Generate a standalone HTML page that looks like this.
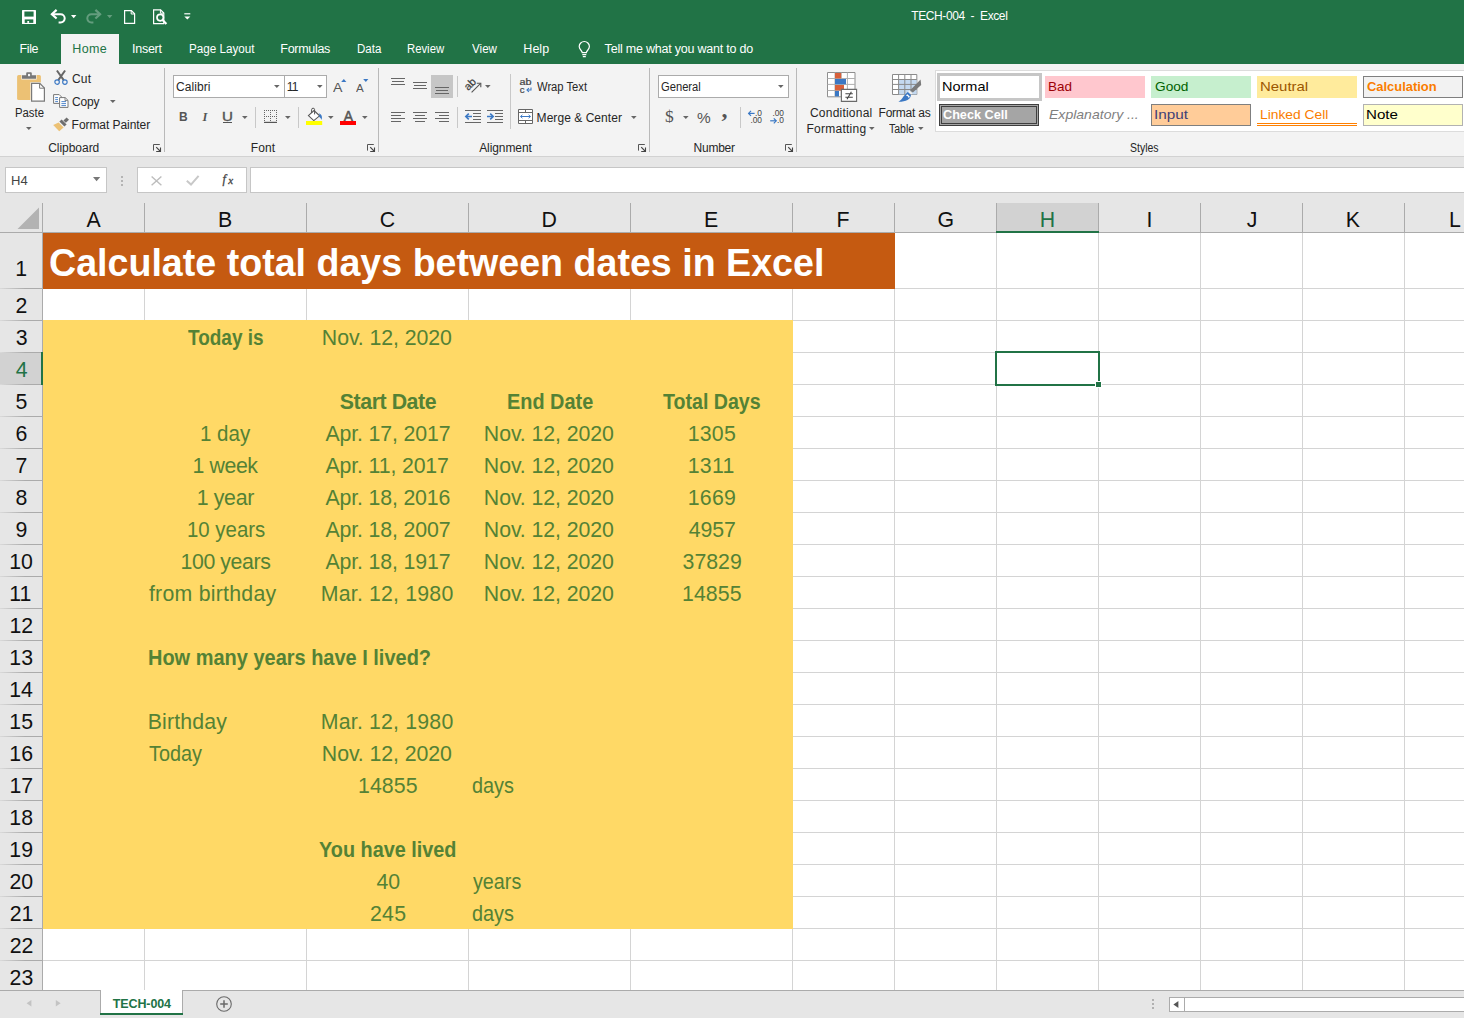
<!DOCTYPE html>
<html lang="en">
<head>
<meta charset="utf-8">
<title>TECH-004 - Excel</title>
<style>
*{box-sizing:border-box;margin:0;padding:0}
html,body{width:1464px;height:1018px;overflow:hidden;background:#fff}
body{position:relative;font-family:"Liberation Sans",sans-serif;font-size:12px;color:#262626}
.abs,.t,.c,.ch,.rh,.vl,.hl,.box,.sep,.title{position:absolute}
.t{white-space:nowrap;line-height:16px;height:16px;letter-spacing:-0.25px}
svg{position:absolute;overflow:visible}
.w{color:#fff}
.box{background:#fff;border:1px solid #c6c6c6}
.sep{width:1px;background:#d5d5d5}
.vl{top:232px;width:1px;height:758px;background:#d4d4d4}
.hl{left:42px;width:1422px;height:1px;background:#d4d4d4}
.ch{height:28px;line-height:28px;font-size:21.3px;color:#111;white-space:nowrap}
.rh{height:32px;line-height:32px;font-size:21.3px;color:#111;white-space:nowrap}
.sel{color:#217346}
.c{height:32px;line-height:32px;font-size:21.3px;color:#548235;white-space:nowrap}
.b{font-weight:bold}
.title{font-weight:bold;font-size:39px;color:#fff;height:56px;line-height:56px;white-space:nowrap}
</style>
</head>
<body>
<div class="abs" style="left:0;top:0;width:1464px;height:64px;background:#217346"></div>
<div class="abs" style="left:61px;top:34px;width:58px;height:30px;background:#f3f3f3"></div>
<svg style="left:22px;top:10px" width="14" height="14" viewBox="0 0 14 14"><rect x="0" y="0" width="14" height="14" rx="0.6" fill="#fff"/><rect x="2.4" y="1.5" width="9.2" height="5.1" fill="#217346"/><rect x="2.7" y="9.4" width="8.6" height="3.5" fill="#217346"/><rect x="5.3" y="11" width="1.8" height="1.9" fill="#fff"/></svg>
<svg style="left:50px;top:9px" width="16" height="15" viewBox="0 0 16 15"><path d="M1.8 5.2H10.6A4.1 4.1 0 0 1 10.6 13.4H8.6" fill="none" stroke="#fff" stroke-width="2"/><path d="M6.6 0.9L1.9 5.2L6.6 9.5" fill="none" stroke="#fff" stroke-width="2.2"/></svg>
<svg style="left:71px;top:15px" width="6" height="4"><path d="M0 0H5.4L2.7 3.2Z" fill="#fff"/></svg>
<svg style="left:86px;top:9px" width="16" height="15" viewBox="0 0 16 15"><g transform="translate(16,0) scale(-1,1)" opacity="0.3"><path d="M1.8 5.2H10.6A4.1 4.1 0 0 1 10.6 13.4H8.6" fill="none" stroke="#fff" stroke-width="2"/><path d="M6.6 0.9L1.9 5.2L6.6 9.5" fill="none" stroke="#fff" stroke-width="2.2"/></g></svg>
<svg style="left:107px;top:15px" width="6" height="4"><path d="M0 0H5.4L2.7 3.2Z" fill="#fff" opacity="0.3"/></svg>
<svg style="left:124px;top:10px" width="12" height="14" viewBox="0 0 12 14"><path d="M0.6 0.6H7.4L10.6 3.8V13.4H0.6Z" fill="none" stroke="#fff" stroke-width="1.2"/><path d="M7.2 0.6V4H10.6" fill="none" stroke="#fff" stroke-width="1"/></svg>
<svg style="left:153px;top:9px" width="15" height="16" viewBox="0 0 15 16"><path d="M0.6 0.8H7.6L10.8 4V14.6H0.6Z" fill="none" stroke="#fff" stroke-width="1.2"/><path d="M7.4 0.8V4.2H10.8" fill="none" stroke="#fff" stroke-width="1"/><circle cx="7.2" cy="8.6" r="3.2" fill="#217346" stroke="#fff" stroke-width="1.7"/><path d="M9.6 11L13.4 15" stroke="#fff" stroke-width="2.1"/></svg>
<svg style="left:184px;top:13px" width="7" height="8"><path d="M0.3 0.8H6.3" stroke="#fff" stroke-width="1.2"/><path d="M0.3 3.4H6.3L3.3 6.6Z" fill="#fff"/></svg>
<div class="t w" style="left:911.23px;top:8px;letter-spacing:-0.399px">TECH-004&nbsp; -&nbsp; Excel</div>
<div class="t w" style="left:19.47px;top:41px;font-size:12.5px;letter-spacing:-0.354px">File</div>
<div class="t" style="left:72.37px;top:41px;font-size:12.5px;letter-spacing:0.346px;color:#217346">Home</div>
<div class="t w" style="left:132.05px;top:41px;font-size:12.5px;letter-spacing:-0.263px">Insert</div>
<div class="t w" style="left:188.64px;top:41px;font-size:12.5px;letter-spacing:0.000px;transform:scaleX(0.9337);transform-origin:0 0">Page Layout</div>
<div class="t w" style="left:280.37px;top:41px;font-size:12.5px;letter-spacing:-0.302px">Formulas</div>
<div class="t w" style="left:356.55px;top:41px;font-size:12.5px;letter-spacing:0.000px;transform:scaleX(0.9220);transform-origin:0 0">Data</div>
<div class="t w" style="left:407.37px;top:41px;font-size:12.5px;letter-spacing:0.000px;transform:scaleX(0.9052);transform-origin:0 0">Review</div>
<div class="t w" style="left:471.75px;top:41px;font-size:12.5px;letter-spacing:0.000px;transform:scaleX(0.9310);transform-origin:0 0">View</div>
<div class="t w" style="left:523.37px;top:41px;font-size:12.5px;letter-spacing:0.014px">Help</div>
<div class="t w" style="left:604.62px;top:41px;font-size:12.5px;letter-spacing:-0.216px">Tell me what you want to do</div>
<svg style="left:578px;top:41px" width="13" height="17" viewBox="0 0 13 17"><path d="M4.2 11.6C4.2 9.6 1.2 8.6 1.2 5.6A5.1 5.1 0 0 1 11.4 5.6C11.4 8.6 8.4 9.6 8.4 11.6Z" fill="none" stroke="#fff" stroke-width="1.2"/><path d="M4.3 13.6H8.3M4.8 15.6H7.8" stroke="#fff" stroke-width="1.1"/></svg>
<div class="abs" style="left:0;top:64px;width:1464px;height:92px;background:#f3f3f3"></div>
<div class="abs" style="left:0;top:156px;width:1464px;height:1px;background:#d2d2d2"></div>
<div class="abs" style="left:164px;top:68px;width:1px;height:84px;background:#b9b9b9"></div>
<div class="abs" style="left:378px;top:68px;width:1px;height:84px;background:#b9b9b9"></div>
<div class="abs" style="left:649px;top:68px;width:1px;height:84px;background:#b9b9b9"></div>
<div class="abs" style="left:796px;top:68px;width:1px;height:84px;background:#b9b9b9"></div>
<svg style="left:17px;top:72px" width="29" height="30"><rect x="0.1" y="2.9" width="23.8" height="25.1" rx="1.6" fill="#ecc174"/><path d="M4.4 7.6V2.8H8.6V1.2Q8.6 0 9.8 0H14.2Q15.4 0 15.4 1.2V2.8H19.6V7.6Z" fill="#f3f3f3"/><path d="M5 6.7V3.3H9.2V1.2Q9.2 0.3 10.1 0.3H13.9Q14.8 0.3 14.8 1.2V3.3H19V6.7Z" fill="#777"/><rect x="11" y="1.9" width="2.1" height="2.3" fill="#f3f3f3"/><path d="M13.4 10.2H23.4L28.6 15.4V30H13.4Z" fill="#f3f3f3"/><path d="M14.6 11.4H22.8L27.4 16V29.2H14.6Z" fill="#fff" stroke="#7a7a7a" stroke-width="1.2"/><path d="M22.6 11.4V16.2H27.4" fill="none" stroke="#7a7a7a" stroke-width="1"/></svg>
<div class="t" style="left:14.77px;top:105px;letter-spacing:0.000px;transform:scaleX(0.9428);transform-origin:0 0">Paste</div>
<svg style="left:25.7px;top:126.8px" width="6" height="4"><path d="M0 0H5.6L2.8 3Z" fill="#666"/></svg>
<svg style="left:54px;top:70px" width="14" height="15"><path d="M2.9 0.5L9.9 10.4M11.1 0.5L4.1 10.4" stroke="#666" stroke-width="2" fill="none"/><circle cx="3.1" cy="12.1" r="2.25" fill="#f3f3f3" stroke="#3b78c4" stroke-width="1.15"/><circle cx="10.9" cy="12.1" r="2.25" fill="#f3f3f3" stroke="#3b78c4" stroke-width="1.15"/></svg>
<div class="t" style="left:71.99px;top:71px;letter-spacing:0.212px">Cut</div>
<svg style="left:52.5px;top:94px" width="16" height="14"><path d="M0.6 0.6H6.2L8.6 3V9.4H0.6Z" fill="#fff" stroke="#777" stroke-width="1"/><path d="M2.2 3.6H5M2.2 5.6H5M2.2 7.6H5" stroke="#3b78c4" stroke-width="0.9"/><path d="M6.6 3.6H12.2L15 6.4V13.4H6.6Z" fill="#fff" stroke="#777" stroke-width="1"/><path d="M12 3.8V6.6H14.8" fill="none" stroke="#777" stroke-width="0.9"/><path d="M8.4 7.6H13M8.4 9.6H13M8.4 11.6H13" stroke="#3b78c4" stroke-width="0.9"/></svg>
<div class="t" style="left:71.99px;top:94px;letter-spacing:-0.127px">Copy</div>
<svg style="left:109.7px;top:100px" width="6" height="4"><path d="M0 0H5.6L2.8 3Z" fill="#666"/></svg>
<svg style="left:53px;top:116.5px" width="16" height="15"><path d="M10.4 3.4L13.6 0.4L16 2.8L12.8 5.8Z" fill="#6e6e6e"/><path d="M6.4 4.6L8.6 2.6L13.6 7.6L11.4 9.6Z" fill="#6e6e6e"/><path d="M5.6 5.4L10.6 10.4L6.2 14.2L0.2 8Z" fill="#ecc174"/></svg>
<div class="t" style="left:71.62px;top:117px;letter-spacing:-0.060px">Format Painter</div>
<div class="t grp" style="left:48.19px;top:140px;letter-spacing:-0.035px">Clipboard</div>
<svg style="left:153px;top:144px" width="8" height="8"><path d="M0.5 6.6V0.5H6.8" fill="none" stroke="#555" stroke-width="1"/><path d="M3.2 3.2L7 7" stroke="#444" stroke-width="1.1"/><path d="M7.5 3.4V7.5H3.2" fill="none" stroke="#444" stroke-width="1.1"/></svg>
<div class="box" style="left:173px;top:75px;width:112px;height:23px;border-color:#ababab"></div>
<div class="box" style="left:284px;top:75px;width:43px;height:23px;border-color:#ababab"></div>
<div class="t" style="left:175.89px;top:79px;letter-spacing:0.085px">Calibri</div>
<svg style="left:273.8px;top:84.8px" width="6" height="4"><path d="M0 0H5.6L2.8 3Z" fill="#666"/></svg>
<div class="t" style="left:286.79px;top:79px;letter-spacing:-0.800px">11</div>
<svg style="left:316.6px;top:84.8px" width="6" height="4"><path d="M0 0H5.6L2.8 3Z" fill="#666"/></svg>
<div class="t" style="left:333.47px;top:80px;font-size:12.9px;letter-spacing:0.000px;transform:scaleX(1.0989);transform-origin:0 0;color:#555">A</div>
<svg style="left:341px;top:79px" width="6" height="4"><path d="M0.2 3H5.4L2.8 0Z" fill="#3b78c4"/></svg>
<div class="t" style="left:356.18px;top:80px;font-size:10.5px;letter-spacing:0.000px;transform:scaleX(1.1059);transform-origin:0 0;color:#555">A</div>
<svg style="left:362.7px;top:79px" width="6" height="4"><path d="M0.2 0H5.4L2.8 3Z" fill="#3b78c4"/></svg>
<div class="t" style="left:179.00px;top:109px;letter-spacing:0.082px;font-weight:bold;color:#555">B</div>
<div class="t" style="left:202.42px;top:109px;font-size:12.5px;font-weight:bold;font-style:italic;font-family:'Liberation Serif',serif;color:#555">I</div>
<div class="t" style="left:221.93px;top:109px;letter-spacing:0.000px;transform:scaleX(1.2620);transform-origin:0 0;color:#555;-webkit-text-stroke:0.35px #555">U</div>
<div class="abs" style="left:223px;top:122px;width:9px;height:1px;background:#555"></div>
<svg style="left:241.8px;top:116px" width="6" height="4"><path d="M0 0H5.6L2.8 3Z" fill="#666"/></svg>
<div class="abs" style="left:255px;top:107px;width:1px;height:21px;background:#c8c8c8"></div>
<svg style="left:264px;top:110px" width="13" height="13"><path d="M0.5 0V11M6.5 0V11M12.5 0V11M0 0.5H13M0 6.5H13" fill="none" stroke="#666" stroke-width="1" stroke-dasharray="1 1"/><path d="M0 12.4H13" stroke="#555" stroke-width="1.2"/></svg>
<svg style="left:284.8px;top:116px" width="6" height="4"><path d="M0 0H5.6L2.8 3Z" fill="#666"/></svg>
<div class="abs" style="left:298px;top:107px;width:1px;height:21px;background:#c8c8c8"></div>
<svg style="left:306px;top:108px" width="17" height="17"><path d="M2.4 7.6L8 2.6L13.6 7.8L7.8 12.6Z" fill="#fff" stroke="#555" stroke-width="1.1"/><path d="M5.6 5V1.7A1.3 1.3 0 0 1 8.6 1.7V6.4" fill="none" stroke="#555" stroke-width="1"/><path d="M12.8 5.2C15.6 6 16.8 9 15.4 12C15 10.4 14.2 9.4 12.6 8.8L13.8 7.6Z" fill="#3b78c4"/><path d="M0 13H16.2V17H0Z" fill="#ffff00"/></svg>
<svg style="left:327.7px;top:116px" width="6" height="4"><path d="M0 0H5.6L2.8 3Z" fill="#666"/></svg>
<div class="t" style="left:343.77px;top:109px;font-size:13.8px;letter-spacing:0.049px;color:#555;-webkit-text-stroke:0.5px #555">A</div>
<div class="abs" style="left:340px;top:121px;width:16px;height:4px;background:#ff0000"></div>
<svg style="left:361.7px;top:116px" width="6" height="4"><path d="M0 0H5.6L2.8 3Z" fill="#666"/></svg>
<div class="t grp" style="left:250.72px;top:140px;letter-spacing:0.120px">Font</div>
<svg style="left:367px;top:144px" width="8" height="8"><path d="M0.5 6.6V0.5H6.8" fill="none" stroke="#555" stroke-width="1"/><path d="M3.2 3.2L7 7" stroke="#444" stroke-width="1.1"/><path d="M7.5 3.4V7.5H3.2" fill="none" stroke="#444" stroke-width="1.1"/></svg>
<div class="abs" style="left:391.0px;top:78px;width:14px;height:1px;background:#666"></div>
<div class="abs" style="left:392.0px;top:81px;width:12px;height:1px;background:#666"></div>
<div class="abs" style="left:391.0px;top:84px;width:14px;height:1px;background:#666"></div>
<div class="abs" style="left:413.0px;top:82px;width:14px;height:1px;background:#666"></div>
<div class="abs" style="left:414.0px;top:85px;width:12px;height:1px;background:#666"></div>
<div class="abs" style="left:413.0px;top:88px;width:14px;height:1px;background:#666"></div>
<div class="abs" style="left:431px;top:75px;width:22px;height:23px;background:#c6c6c6"></div>
<div class="abs" style="left:435.0px;top:87px;width:14px;height:1px;background:#666"></div>
<div class="abs" style="left:436.0px;top:90px;width:12px;height:1px;background:#666"></div>
<div class="abs" style="left:435.0px;top:93px;width:14px;height:1px;background:#666"></div>
<div class="abs" style="left:457px;top:76px;width:1px;height:21px;background:#c8c8c8"></div>
<svg style="left:464px;top:77px" width="19" height="17"><text x="0" y="0" transform="translate(4.2,14) rotate(-45)" font-family="Liberation Sans, sans-serif" font-size="10.8" fill="#444" stroke="#444" stroke-width="0.25">ab</text><path d="M7.6 15.4L16.4 6.6" stroke="#555" stroke-width="1.1"/><path d="M12.8 6.2H16.8V10.2" fill="none" stroke="#555" stroke-width="1.1"/></svg>
<svg style="left:485px;top:84.6px" width="6" height="4"><path d="M0 0H5.6L2.8 3Z" fill="#666"/></svg>
<div class="abs" style="left:510px;top:74px;width:1px;height:55px;background:#c8c8c8"></div>
<svg style="left:519px;top:78px" width="14" height="16"><text x="0.6" y="7.2" font-family="Liberation Sans, sans-serif" font-size="8.4" fill="#444" stroke="#444" stroke-width="0.2" textLength="12" lengthAdjust="spacingAndGlyphs">ab</text><text x="0.8" y="14.8" font-family="Liberation Sans, sans-serif" font-size="9.6" fill="#444" stroke="#444" stroke-width="0.2">c</text><path d="M12 9.6V12H8.2" fill="none" stroke="#3b78c4" stroke-width="1.1"/><path d="M9.9 10.2L8 12L9.9 13.8" fill="none" stroke="#3b78c4" stroke-width="1.1"/></svg>
<div class="t" style="left:537.15px;top:79px;letter-spacing:0.000px;transform:scaleX(0.9348);transform-origin:0 0">Wrap Text</div>
<div class="abs" style="left:391px;top:112px;width:14px;height:1px;background:#666"></div>
<div class="abs" style="left:391px;top:115px;width:10px;height:1px;background:#666"></div>
<div class="abs" style="left:391px;top:118px;width:14px;height:1px;background:#666"></div>
<div class="abs" style="left:391px;top:121px;width:10px;height:1px;background:#666"></div>
<div class="abs" style="left:413.0px;top:112px;width:14px;height:1px;background:#666"></div>
<div class="abs" style="left:415.0px;top:115px;width:10px;height:1px;background:#666"></div>
<div class="abs" style="left:413.0px;top:118px;width:14px;height:1px;background:#666"></div>
<div class="abs" style="left:415.0px;top:121px;width:10px;height:1px;background:#666"></div>
<div class="abs" style="left:435px;top:112px;width:14px;height:1px;background:#666"></div>
<div class="abs" style="left:439px;top:115px;width:10px;height:1px;background:#666"></div>
<div class="abs" style="left:435px;top:118px;width:14px;height:1px;background:#666"></div>
<div class="abs" style="left:439px;top:121px;width:10px;height:1px;background:#666"></div>
<div class="abs" style="left:457px;top:107px;width:1px;height:21px;background:#c8c8c8"></div>
<div class="abs" style="left:465px;top:110px;width:16px;height:1px;background:#666"></div>
<div class="abs" style="left:473px;top:113px;width:8px;height:1px;background:#666"></div>
<div class="abs" style="left:473px;top:116px;width:8px;height:1px;background:#666"></div>
<div class="abs" style="left:473px;top:119px;width:8px;height:1px;background:#666"></div>
<div class="abs" style="left:465px;top:122px;width:16px;height:1px;background:#666"></div>
<svg style="left:465px;top:113px" width="8" height="7"><path d="M1 3.5H7" stroke="#3b78c4" stroke-width="1.5"/><path d="M3.8 0.6L0.8 3.5L3.8 6.4" fill="none" stroke="#3b78c4" stroke-width="1.6"/></svg>
<div class="abs" style="left:487px;top:110px;width:16px;height:1px;background:#666"></div>
<div class="abs" style="left:495px;top:113px;width:8px;height:1px;background:#666"></div>
<div class="abs" style="left:495px;top:116px;width:8px;height:1px;background:#666"></div>
<div class="abs" style="left:495px;top:119px;width:8px;height:1px;background:#666"></div>
<div class="abs" style="left:487px;top:122px;width:16px;height:1px;background:#666"></div>
<svg style="left:487px;top:113px" width="8" height="7"><path d="M0 3.5H6" stroke="#3b78c4" stroke-width="1.5"/><path d="M3.2 0.6L6.2 3.5L3.2 6.4" fill="none" stroke="#3b78c4" stroke-width="1.6"/></svg>
<svg style="left:518px;top:109px" width="15" height="15"><path d="M0.5 0.5H14.5V14.5H0.5Z" fill="#fff" stroke="#666" stroke-width="1"/><path d="M0.5 3.5H14.5M0.5 11.5H14.5M7.5 0.5V3.5M7.5 11.5V14.5" stroke="#666" stroke-width="1" fill="none"/><path d="M2.6 7.5H12.4" stroke="#3b78c4" stroke-width="1"/><path d="M4.4 5.8L2.6 7.5L4.4 9.2M10.6 5.8L12.4 7.5L10.6 9.2" fill="none" stroke="#3b78c4" stroke-width="1"/></svg>
<div class="t" style="left:536.62px;top:110px;letter-spacing:0.045px">Merge &amp; Center</div>
<svg style="left:631.4px;top:116px" width="6" height="4"><path d="M0 0H5.6L2.8 3Z" fill="#666"/></svg>
<div class="t grp" style="left:479.18px;top:140px;letter-spacing:-0.081px">Alignment</div>
<svg style="left:638px;top:144px" width="8" height="8"><path d="M0.5 6.6V0.5H6.8" fill="none" stroke="#555" stroke-width="1"/><path d="M3.2 3.2L7 7" stroke="#444" stroke-width="1.1"/><path d="M7.5 3.4V7.5H3.2" fill="none" stroke="#444" stroke-width="1.1"/></svg>
<div class="box" style="left:658px;top:75px;width:131px;height:23px;border-color:#ababab"></div>
<div class="t" style="left:661.24px;top:79px;letter-spacing:0.000px;transform:scaleX(0.9325);transform-origin:0 0">General</div>
<svg style="left:778.3px;top:85px" width="6" height="4"><path d="M0 0H5.6L2.8 3Z" fill="#666"/></svg>
<div class="t" style="left:664.95px;top:108px;font-size:17.5px;letter-spacing:0.040px;font-family:'Liberation Serif',serif;color:#555">$</div>
<svg style="left:682.7px;top:116px" width="6" height="4"><path d="M0 0H5.6L2.8 3Z" fill="#666"/></svg>
<div class="t" style="left:697.05px;top:110px;font-size:15.4px;letter-spacing:0.005px;color:#555">%</div>
<div class="t" style="left:721.58px;top:101px;font-size:24px;font-weight:bold;font-family:'Liberation Serif',serif;color:#555">,</div>
<div class="abs" style="left:740px;top:107px;width:1px;height:21px;background:#c8c8c8"></div>
<svg style="left:748px;top:110px" width="15" height="14"><path d="M0.6 3.4H6.6" stroke="#3b78c4" stroke-width="1.2"/><path d="M3 0.9L0.6 3.4L3 5.9" fill="none" stroke="#3b78c4" stroke-width="1.2"/><text x="7" y="5.6" textLength="7" font-family="Liberation Sans, sans-serif" font-size="8.8" fill="#444" lengthAdjust="spacingAndGlyphs">.0</text><text x="2.4" y="13" textLength="11.6" font-family="Liberation Sans, sans-serif" font-size="8.8" fill="#444" lengthAdjust="spacingAndGlyphs">.00</text></svg>
<svg style="left:770px;top:110px" width="15" height="14"><text x="2.4" y="5.6" textLength="11.6" font-family="Liberation Sans, sans-serif" font-size="8.8" fill="#444" lengthAdjust="spacingAndGlyphs">.00</text><path d="M0.2 10.8H6.2" stroke="#3b78c4" stroke-width="1.2"/><path d="M3.8 8.3L6.2 10.8L3.8 13.3" fill="none" stroke="#3b78c4" stroke-width="1.2"/><text x="7" y="13" textLength="7" font-family="Liberation Sans, sans-serif" font-size="8.8" fill="#444" lengthAdjust="spacingAndGlyphs">.0</text></svg>
<div class="t grp" style="left:693.62px;top:140px;letter-spacing:-0.259px">Number</div>
<svg style="left:785px;top:144px" width="8" height="8"><path d="M0.5 6.6V0.5H6.8" fill="none" stroke="#555" stroke-width="1"/><path d="M3.2 3.2L7 7" stroke="#444" stroke-width="1.1"/><path d="M7.5 3.4V7.5H3.2" fill="none" stroke="#444" stroke-width="1.1"/></svg>
<svg style="left:827px;top:72px" width="31" height="31"><path d="M0.5 0.5H28V24.8H0.5Z" fill="#fff" stroke="#8f8f8f" stroke-width="1"/><path d="M8 0.5V24.8M14.2 0.5V24.8M20.4 0.5V24.8M0.5 6.5H28M0.5 12.4H28M0.5 18.5H28" stroke="#b0b0b0" stroke-width="1" fill="none"/><path d="M8 1H14.2V6.4H8Z" fill="#d8603a"/><path d="M8 7H19V12.3H8Z" fill="#3b78c4"/><path d="M8 13H17V18.4H8Z" fill="#d8603a"/><path d="M8 19H12V24.4H8Z" fill="#3b78c4"/><path d="M14.4 17.4H29.6V29.4H14.4Z" fill="#fff" stroke="#6a6a6a" stroke-width="1.1"/><path d="M18.4 21.8H25.8M18.4 25.2H25.8M24.4 19.8L20 27.2" stroke="#444" stroke-width="1.1"/></svg>
<div class="t" style="left:809.99px;top:105px;letter-spacing:0.217px">Conditional</div>
<div class="t" style="left:806.52px;top:121px;letter-spacing:0.245px">Formatting</div>
<svg style="left:868.8px;top:127px" width="6" height="4"><path d="M0 0H5.6L2.8 3Z" fill="#666"/></svg>
<svg style="left:892px;top:74px" width="31" height="29"><path d="M0.5 0.5H24.8V20.5H0.5Z" fill="#fff" stroke="#8a8a8a" stroke-width="1"/><path d="M6.6 5.6H24.6V20.4H6.6Z" fill="#c4d9f0"/><path d="M6.6 0.5V20.5M12.8 0.5V20.5M19 0.5V20.5M0.5 5.5H24.8M0.5 10.4H24.8M0.5 15.5H24.8" stroke="#8a8a8a" stroke-width="1" fill="none"/><path d="M28.6 5.6L29.2 11L20.8 18.6L18.2 16.2Z" fill="#7a7a7a"/><path d="M17.6 16.4L20.6 19.2L19.2 20.6L16.2 17.8Z" fill="#f3f3f3"/><path d="M15.8 18L19 21C18.4 25.4 14.6 27.8 6.4 27.8C10.6 25.6 11.6 20.8 15.8 18Z" fill="#3b78c4"/><path d="M15.4 20.2L17.8 22.4L16.8 24.2C16.4 22.6 15.2 21.8 13.8 21.6Z" fill="#fff"/></svg>
<div class="t" style="left:878.62px;top:105px;letter-spacing:-0.249px">Format as</div>
<div class="t" style="left:888.66px;top:121px;letter-spacing:0.000px;transform:scaleX(0.8763);transform-origin:0 0">Table</div>
<svg style="left:917.8px;top:127px" width="6" height="4"><path d="M0 0H5.6L2.8 3Z" fill="#666"/></svg>
<div class="abs" style="left:935px;top:70px;width:540px;height:62px;background:#fff;border:1px solid #dcdcdc"></div>
<div class="abs" style="left:937px;top:73px;width:105px;height:28px;background:#fff;border:3px solid #c6c6c6"></div>
<div class="t" style="left:942.41px;top:79px;font-size:13px;letter-spacing:0.000px;transform:scaleX(1.1137);transform-origin:0 0;color:#000">Normal</div>
<div class="abs" style="left:1045px;top:76px;width:100px;height:22px;background:#ffc7ce"></div>
<div class="t" style="left:1048.19px;top:79px;font-size:13px;letter-spacing:0.000px;transform:scaleX(1.0364);transform-origin:0 0;color:#9c0006">Bad</div>
<div class="abs" style="left:1151px;top:76px;width:100px;height:22px;background:#c6efce"></div>
<div class="t" style="left:1154.81px;top:79px;font-size:13px;letter-spacing:0.000px;transform:scaleX(1.0525);transform-origin:0 0;color:#006100">Good</div>
<div class="abs" style="left:1257px;top:76px;width:100px;height:22px;background:#ffeb9c"></div>
<div class="t" style="left:1260.28px;top:79px;font-size:13px;letter-spacing:0.000px;transform:scaleX(1.1483);transform-origin:0 0;color:#9c5700">Neutral</div>
<div class="abs" style="left:1363px;top:76px;width:100px;height:22px;background:#f2f2f2;border:1px solid #7f7f7f"></div>
<div class="t" style="left:1366.67px;top:79px;font-size:13px;letter-spacing:0.000px;font-weight:bold;transform:scaleX(0.9938);transform-origin:0 0;color:#fa7d00">Calculation</div>
<div class="abs" style="left:939px;top:104px;width:100px;height:22px;background:#a5a5a5;border:1px solid #3f3f3f"></div>
<div class="abs" style="left:941px;top:106px;width:96px;height:18px;border:1px solid #3f3f3f"></div>
<div class="t" style="left:943.08px;top:107px;font-size:13px;letter-spacing:0.000px;font-weight:bold;transform:scaleX(0.9736);transform-origin:0 0;color:#fff">Check Cell</div>
<div class="t" style="left:1048.87px;top:107px;font-size:13px;letter-spacing:0.000px;font-style:italic;transform:scaleX(1.0801);transform-origin:0 0;color:#7f7f7f">Explanatory ...</div>
<div class="abs" style="left:1151px;top:104px;width:100px;height:22px;background:#ffcc99;border:1px solid #7f7f7f"></div>
<div class="t" style="left:1154.09px;top:107px;font-size:13px;letter-spacing:0.000px;transform:scaleX(1.1767);transform-origin:0 0;color:#3f3f76">Input</div>
<div class="t" style="left:1260.37px;top:107px;font-size:13px;letter-spacing:0.000px;transform:scaleX(1.0629);transform-origin:0 0;color:#fa7d00">Linked Cell</div>
<div class="abs" style="left:1257px;top:123px;width:100px;height:1px;background:#ff8001"></div>
<div class="abs" style="left:1257px;top:125px;width:100px;height:1px;background:#ff8001"></div>
<div class="abs" style="left:1363px;top:104px;width:100px;height:22px;background:#ffffcc;border:1px solid #b2b2b2"></div>
<div class="t" style="left:1365.96px;top:107px;font-size:13px;letter-spacing:0.000px;transform:scaleX(1.1621);transform-origin:0 0;color:#000">Note</div>
<div class="t grp" style="left:1130.12px;top:140px;letter-spacing:0.000px;transform:scaleX(0.8738);transform-origin:0 0">Styles</div>
<div class="abs" style="left:0px;top:157px;width:1464px;height:47px;background:#e6e6e6"></div>
<div class="box" style="left:5px;top:167px;width:102px;height:26px;border-color:#c6c6c6"></div>
<div class="t" style="left:11.43px;top:173px;font-size:12.5px;letter-spacing:0.000px;transform:scaleX(1.0420);transform-origin:0 0;color:#444">H4</div>
<svg style="left:93px;top:177px" width="8" height="5"><path d="M0 0H7.2L3.6 4.2Z" fill="#777"/></svg>
<div class="abs" style="left:121px;top:176px;width:2px;height:2px;background:#b4b4b4"></div>
<div class="abs" style="left:121px;top:180px;width:2px;height:2px;background:#b4b4b4"></div>
<div class="abs" style="left:121px;top:184px;width:2px;height:2px;background:#b4b4b4"></div>
<div class="box" style="left:137px;top:167px;width:110px;height:26px;border-color:#c6c6c6"></div>
<svg style="left:150.5px;top:175.5px" width="11" height="10"><path d="M0.6 0.5L10.4 9.3M10.4 0.5L0.6 9.3" stroke="#bdbdbd" stroke-width="1.4" fill="none"/></svg>
<svg style="left:186px;top:175px" width="14" height="11"><path d="M0.8 5.8L5 9.6L12.6 0.8" stroke="#c8c8c8" stroke-width="2" fill="none"/></svg>
<div class="t" style="left:222.60px;top:171px;font-size:12.4px;font-style:italic;font-family:'Liberation Serif',serif;color:#444;-webkit-text-stroke:0.3px #444">f</div>
<div class="t" style="left:228.33px;top:172px;font-size:11px;font-style:italic;font-family:'Liberation Serif',serif;color:#444;-webkit-text-stroke:0.3px #444">x</div>
<div class="box" style="left:250px;top:167px;width:1230px;height:26px;border-color:#c6c6c6"></div>
<div id="grid">
<div class="abs" style="left:0;top:203px;width:1464px;height:29px;background:#e6e6e6"></div>
<div class="abs" style="left:0;top:232px;width:42px;height:758px;background:#e6e6e6"></div>
<div class="abs" style="left:997px;top:203px;width:101px;height:29px;background:#d2d2d2"></div>
<div class="abs" style="left:0;top:353px;width:41px;height:31px;background:#d2d2d2"></div>
<div class="vl" style="left:144px"></div>
<div class="vl" style="left:306px"></div>
<div class="vl" style="left:468px"></div>
<div class="vl" style="left:630px"></div>
<div class="vl" style="left:792px"></div>
<div class="vl" style="left:894px"></div>
<div class="vl" style="left:996px"></div>
<div class="vl" style="left:1098px"></div>
<div class="vl" style="left:1200px"></div>
<div class="vl" style="left:1302px"></div>
<div class="vl" style="left:1404px"></div>
<div class="hl" style="top:288px"></div>
<div class="hl" style="top:320px"></div>
<div class="hl" style="top:352px"></div>
<div class="hl" style="top:384px"></div>
<div class="hl" style="top:416px"></div>
<div class="hl" style="top:448px"></div>
<div class="hl" style="top:480px"></div>
<div class="hl" style="top:512px"></div>
<div class="hl" style="top:544px"></div>
<div class="hl" style="top:576px"></div>
<div class="hl" style="top:608px"></div>
<div class="hl" style="top:640px"></div>
<div class="hl" style="top:672px"></div>
<div class="hl" style="top:704px"></div>
<div class="hl" style="top:736px"></div>
<div class="hl" style="top:768px"></div>
<div class="hl" style="top:800px"></div>
<div class="hl" style="top:832px"></div>
<div class="hl" style="top:864px"></div>
<div class="hl" style="top:896px"></div>
<div class="hl" style="top:928px"></div>
<div class="hl" style="top:960px"></div>
<div class="abs" style="left:0;top:232px;width:1464px;height:1px;background:#ababab"></div>
<div class="abs" style="left:42px;top:203px;width:1px;height:787px;background:#ababab"></div>
<div class="abs" style="left:144px;top:203px;width:1px;height:29px;background:#ababab"></div>
<div class="abs" style="left:306px;top:203px;width:1px;height:29px;background:#ababab"></div>
<div class="abs" style="left:468px;top:203px;width:1px;height:29px;background:#ababab"></div>
<div class="abs" style="left:630px;top:203px;width:1px;height:29px;background:#ababab"></div>
<div class="abs" style="left:792px;top:203px;width:1px;height:29px;background:#ababab"></div>
<div class="abs" style="left:894px;top:203px;width:1px;height:29px;background:#ababab"></div>
<div class="abs" style="left:996px;top:203px;width:1px;height:29px;background:#ababab"></div>
<div class="abs" style="left:1098px;top:203px;width:1px;height:29px;background:#ababab"></div>
<div class="abs" style="left:1200px;top:203px;width:1px;height:29px;background:#ababab"></div>
<div class="abs" style="left:1302px;top:203px;width:1px;height:29px;background:#ababab"></div>
<div class="abs" style="left:1404px;top:203px;width:1px;height:29px;background:#ababab"></div>
<div class="abs" style="left:0;top:288px;width:42px;height:1px;background:linear-gradient(90deg,#dadada,#ababab 60%)"></div>
<div class="abs" style="left:0;top:320px;width:42px;height:1px;background:linear-gradient(90deg,#dadada,#ababab 60%)"></div>
<div class="abs" style="left:0;top:352px;width:42px;height:1px;background:linear-gradient(90deg,#dadada,#ababab 60%)"></div>
<div class="abs" style="left:0;top:384px;width:42px;height:1px;background:linear-gradient(90deg,#dadada,#ababab 60%)"></div>
<div class="abs" style="left:0;top:416px;width:42px;height:1px;background:linear-gradient(90deg,#dadada,#ababab 60%)"></div>
<div class="abs" style="left:0;top:448px;width:42px;height:1px;background:linear-gradient(90deg,#dadada,#ababab 60%)"></div>
<div class="abs" style="left:0;top:480px;width:42px;height:1px;background:linear-gradient(90deg,#dadada,#ababab 60%)"></div>
<div class="abs" style="left:0;top:512px;width:42px;height:1px;background:linear-gradient(90deg,#dadada,#ababab 60%)"></div>
<div class="abs" style="left:0;top:544px;width:42px;height:1px;background:linear-gradient(90deg,#dadada,#ababab 60%)"></div>
<div class="abs" style="left:0;top:576px;width:42px;height:1px;background:linear-gradient(90deg,#dadada,#ababab 60%)"></div>
<div class="abs" style="left:0;top:608px;width:42px;height:1px;background:linear-gradient(90deg,#dadada,#ababab 60%)"></div>
<div class="abs" style="left:0;top:640px;width:42px;height:1px;background:linear-gradient(90deg,#dadada,#ababab 60%)"></div>
<div class="abs" style="left:0;top:672px;width:42px;height:1px;background:linear-gradient(90deg,#dadada,#ababab 60%)"></div>
<div class="abs" style="left:0;top:704px;width:42px;height:1px;background:linear-gradient(90deg,#dadada,#ababab 60%)"></div>
<div class="abs" style="left:0;top:736px;width:42px;height:1px;background:linear-gradient(90deg,#dadada,#ababab 60%)"></div>
<div class="abs" style="left:0;top:768px;width:42px;height:1px;background:linear-gradient(90deg,#dadada,#ababab 60%)"></div>
<div class="abs" style="left:0;top:800px;width:42px;height:1px;background:linear-gradient(90deg,#dadada,#ababab 60%)"></div>
<div class="abs" style="left:0;top:832px;width:42px;height:1px;background:linear-gradient(90deg,#dadada,#ababab 60%)"></div>
<div class="abs" style="left:0;top:864px;width:42px;height:1px;background:linear-gradient(90deg,#dadada,#ababab 60%)"></div>
<div class="abs" style="left:0;top:896px;width:42px;height:1px;background:linear-gradient(90deg,#dadada,#ababab 60%)"></div>
<div class="abs" style="left:0;top:928px;width:42px;height:1px;background:linear-gradient(90deg,#dadada,#ababab 60%)"></div>
<div class="abs" style="left:0;top:960px;width:42px;height:1px;background:linear-gradient(90deg,#dadada,#ababab 60%)"></div>
<div class="abs" style="left:996px;top:231px;width:103px;height:2px;background:#217346"></div>
<div class="abs" style="left:41px;top:352px;width:2px;height:33px;background:#217346"></div>
<svg style="left:0;top:204px" width="42" height="28"><path d="M39 3.5V25H17.5Z" fill="#b3b3b3"/></svg>
<div class="ch" style="left:86.40px;top:206px">A</div>
<div class="ch" style="left:218.08px;top:206px">B</div>
<div class="ch" style="left:379.67px;top:206px">C</div>
<div class="ch" style="left:541.44px;top:206px">D</div>
<div class="ch" style="left:703.98px;top:206px">E</div>
<div class="ch" style="left:836.55px;top:206px">F</div>
<div class="ch" style="left:937.48px;top:206px">G</div>
<div class="ch sel" style="left:1039.80px;top:206px">H</div>
<div class="ch" style="left:1146.54px;top:206px">I</div>
<div class="ch" style="left:1246.80px;top:206px">J</div>
<div class="ch" style="left:1345.64px;top:206px">K</div>
<div class="ch" style="left:1449.06px;top:206px">L</div>
<div class="rh" style="left:15.29px;top:253px">1</div>
<div class="rh" style="left:15.58px;top:290px">2</div>
<div class="rh" style="left:15.64px;top:322px">3</div>
<div class="rh sel" style="left:15.64px;top:354px">4</div>
<div class="rh" style="left:15.60px;top:386px">5</div>
<div class="rh" style="left:15.50px;top:418px">6</div>
<div class="rh" style="left:15.57px;top:450px">7</div>
<div class="rh" style="left:15.58px;top:482px">8</div>
<div class="rh" style="left:15.58px;top:514px">9</div>
<div class="rh" style="left:9.26px;top:546px">10</div>
<div class="rh" style="left:9.36px;top:578px">11</div>
<div class="rh" style="left:9.38px;top:610px">12</div>
<div class="rh" style="left:9.31px;top:642px">13</div>
<div class="rh" style="left:9.15px;top:674px">14</div>
<div class="rh" style="left:9.29px;top:706px">15</div>
<div class="rh" style="left:9.31px;top:738px">16</div>
<div class="rh" style="left:9.38px;top:770px">17</div>
<div class="rh" style="left:9.31px;top:802px">18</div>
<div class="rh" style="left:9.35px;top:834px">19</div>
<div class="rh" style="left:9.53px;top:866px">20</div>
<div class="rh" style="left:9.64px;top:898px">21</div>
<div class="rh" style="left:9.65px;top:930px">22</div>
<div class="rh" style="left:9.59px;top:962px">23</div>
<div class="abs" style="left:43px;top:233px;width:852px;height:56px;background:#c55a11"></div>
<div class="abs" style="left:43px;top:320px;width:750px;height:609px;background:#ffd966"></div>
<div class="title" style="left:48.56px;top:235px;transform:scaleX(0.9642);transform-origin:0 0">Calculate total days between dates in Excel</div>
<div class="c b" style="left:187.89px;top:322px;transform:scaleX(0.8910);transform-origin:0 0">Today is</div>
<div class="c" style="left:321.85px;top:322px;letter-spacing:-0.087px">Nov. 12, 2020</div>
<div class="c b" style="left:339.79px;top:386px;letter-spacing:-0.430px">Start Date</div>
<div class="c b" style="left:506.67px;top:386px;transform:scaleX(0.9339);transform-origin:0 0">End Date</div>
<div class="c b" style="left:662.83px;top:386px;transform:scaleX(0.9202);transform-origin:0 0">Total Days</div>
<div class="c" style="left:200.24px;top:418px;transform:scaleX(0.9635);transform-origin:0 0">1 day</div>
<div class="c" style="left:325.56px;top:418px;letter-spacing:-0.148px">Apr. 17, 2017</div>
<div class="c" style="left:483.85px;top:418px;letter-spacing:-0.087px">Nov. 12, 2020</div>
<div class="c" style="left:687.68px;top:418px;letter-spacing:0.244px">1305</div>
<div class="c" style="left:192.58px;top:450px;letter-spacing:-0.419px">1 week</div>
<div class="c" style="left:325.56px;top:450px;letter-spacing:-0.148px">Apr. 11, 2017</div>
<div class="c" style="left:483.85px;top:450px;letter-spacing:-0.087px">Nov. 12, 2020</div>
<div class="c" style="left:687.68px;top:450px;letter-spacing:0.293px">1311</div>
<div class="c" style="left:196.63px;top:482px;letter-spacing:-0.305px">1 year</div>
<div class="c" style="left:325.56px;top:482px;letter-spacing:-0.160px">Apr. 18, 2016</div>
<div class="c" style="left:483.85px;top:482px;letter-spacing:-0.087px">Nov. 12, 2020</div>
<div class="c" style="left:687.68px;top:482px;letter-spacing:0.282px">1669</div>
<div class="c" style="left:186.55px;top:514px;transform:scaleX(0.9583);transform-origin:0 0">10 years</div>
<div class="c" style="left:325.56px;top:514px;letter-spacing:-0.148px">Apr. 18, 2007</div>
<div class="c" style="left:483.85px;top:514px;letter-spacing:-0.087px">Nov. 12, 2020</div>
<div class="c" style="left:688.81px;top:514px;letter-spacing:-0.075px">4957</div>
<div class="c" style="left:180.53px;top:546px;letter-spacing:-0.406px">100 years</div>
<div class="c" style="left:325.56px;top:546px;letter-spacing:-0.148px">Apr. 18, 1917</div>
<div class="c" style="left:483.85px;top:546px;letter-spacing:-0.087px">Nov. 12, 2020</div>
<div class="c" style="left:682.59px;top:546px">37829</div>
<div class="c" style="left:148.90px;top:578px;letter-spacing:0.246px">from birthday</div>
<div class="c" style="left:320.85px;top:578px;letter-spacing:0.179px">Mar. 12, 1980</div>
<div class="c" style="left:483.85px;top:578px;letter-spacing:-0.087px">Nov. 12, 2020</div>
<div class="c" style="left:681.98px;top:578px;letter-spacing:0.072px">14855</div>
<div class="c b" style="left:148.06px;top:642px;transform:scaleX(0.9377);transform-origin:0 0">How many years have I lived?</div>
<div class="c" style="left:147.65px;top:706px;letter-spacing:0.164px">Birthday</div>
<div class="c" style="left:320.85px;top:706px;letter-spacing:0.179px">Mar. 12, 1980</div>
<div class="c" style="left:148.95px;top:738px;transform:scaleX(0.9322);transform-origin:0 0">Today</div>
<div class="c" style="left:321.85px;top:738px;letter-spacing:-0.087px">Nov. 12, 2020</div>
<div class="c" style="left:357.98px;top:770px;letter-spacing:0.072px">14855</div>
<div class="c" style="left:471.97px;top:770px;transform:scaleX(0.9324);transform-origin:0 0">days</div>
<div class="c b" style="left:319.11px;top:834px;transform:scaleX(0.9316);transform-origin:0 0">You have lived</div>
<div class="c" style="left:376.46px;top:866px;letter-spacing:-0.071px">40</div>
<div class="c" style="left:472.75px;top:866px;transform:scaleX(0.9266);transform-origin:0 0">years</div>
<div class="c" style="left:369.93px;top:898px;letter-spacing:0.314px">245</div>
<div class="c" style="left:471.97px;top:898px;transform:scaleX(0.9324);transform-origin:0 0">days</div>
<div class="abs" style="left:995px;top:351px;width:105px;height:35px;border:2px solid #217346"></div>
<div class="abs" style="left:1095px;top:381px;width:7px;height:7px;background:#217346;border:1px solid #fff"></div>
</div>
<div class="abs" style="left:0px;top:990px;width:1464px;height:28px;background:#e6e6e6"></div>
<div class="abs" style="left:0px;top:990px;width:1464px;height:1px;background:#ababab"></div>
<div class="abs" style="left:100px;top:990px;width:83px;height:25px;background:#fff;border-left:1px solid #ababab;border-right:1px solid #ababab"></div>
<div class="abs" style="left:100px;top:1013px;width:83px;height:2px;background:#217346"></div>
<div class="t" style="left:112.76px;top:996px;font-size:12.5px;letter-spacing:-0.105px;font-weight:bold;color:#217346">TECH-004</div>
<svg style="left:26px;top:1000px" width="6" height="7"><path d="M5.4 0V6.6L0.6 3.3Z" fill="#c3c3c3"/></svg>
<svg style="left:55px;top:1000px" width="6" height="7"><path d="M0.8 0V6.6L5.6 3.3Z" fill="#c3c3c3"/></svg>
<svg style="left:216px;top:996px" width="16" height="16"><circle cx="8" cy="8" r="7.3" fill="none" stroke="#6a6a6a" stroke-width="1.1"/><path d="M4.2 8H11.8M8 4.2V11.8" stroke="#6a6a6a" stroke-width="1.5"/></svg>
<div class="abs" style="left:1152px;top:999px;width:2px;height:2px;background:#b0b0b0"></div>
<div class="abs" style="left:1152px;top:1003px;width:2px;height:2px;background:#b0b0b0"></div>
<div class="abs" style="left:1152px;top:1007px;width:2px;height:2px;background:#b0b0b0"></div>
<div class="box" style="left:1184px;top:997px;width:300px;height:15px;border-color:#ababab"></div>
<div class="box" style="left:1169px;top:997px;width:16px;height:15px;border-color:#ababab"></div>
<svg style="left:1173px;top:1001px" width="6" height="8"><path d="M5.4 0V7L0.4 3.5Z" fill="#555"/></svg>
</body>
</html>
